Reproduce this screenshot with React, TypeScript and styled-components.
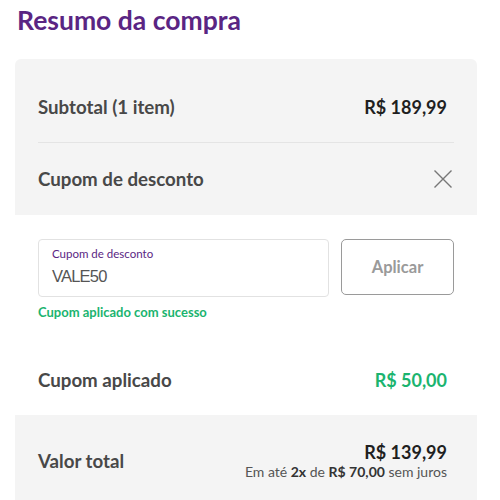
import React from "react";
import styled, { createGlobalStyle } from "styled-components";

const Global = createGlobalStyle`
  html, body { margin: 0; padding: 0; background: #ffffff; }
  body { font-family: Lato, "Open Sans", sans-serif; }
  * { box-sizing: border-box; }
`;

const Page = styled.div`
  width: 500px;
  padding: 5px 23px 0 15px;
`;

const Title = styled.h1`
  margin: 0 0 0 2px;
  font-family: Lato, sans-serif;
  font-size: 26.5px;
  line-height: 30px;
  font-weight: 700;
  color: #5a2583;
`;

const Card = styled.section`
  margin-top: 24px;
  background: #f4f4f4;
  border-radius: 6px 6px 0 0;
  padding-bottom: 40px;
`;

const GrayBlock = styled.div`
  padding: 0 23px;
`;

const Row = styled.div<{ $height: number; $top?: number; $divider?: boolean }>`
  display: flex;
  align-items: center;
  justify-content: space-between;
  height: ${(p) => p.$height}px;
  padding-top: ${(p) => p.$top ?? 0}px;
  border-bottom: ${(p) => (p.$divider ? "1px solid #e4e4e4" : "none")};
`;

const Label = styled.span`
  font-size: 18.7px;
  font-weight: 700;
  color: #484848;
  font-family: Lato, sans-serif;
`;

const Amount = styled.span<{ $green?: boolean }>`
  font-size: 18px;
  font-weight: 700;
  padding-right: 7px;
  color: ${(p) => (p.$green ? "#1bb46f" : "#1f1f1f")};
`;

const CloseButton = styled.button`
  border: none;
  background: none;
  padding: 0;
  width: 22px;
  height: 22px;
  display: flex;
  align-items: center;
  justify-content: center;
  cursor: pointer;
`;

const WhiteBlock = styled.div`
  background: #ffffff;
  padding: 24px 23px 0;
`;

const CouponForm = styled.div`
  display: flex;
  gap: 12px;
  align-items: flex-start;
`;

const Field = styled.label`
  flex: 1;
  height: 58px;
  border: 1px solid #e2e2e2;
  border-radius: 4px;
  padding: 7px 13px 0;
  display: flex;
  flex-direction: column;
`;

const FieldLabel = styled.span`
  font-size: 11.5px;
  line-height: 14px;
  color: #5a2583;
`;

const FieldValue = styled.span`
  margin-top: 4px;
  font-family: "Liberation Sans", Arial, sans-serif;
  font-size: 16.5px;
  line-height: 22px;
  color: #555555;
  letter-spacing: -0.8px;
`;

const ApplyButton = styled.button`
  width: 113px;
  height: 56px;
  border: 1px solid #9a9a9a;
  border-radius: 5px;
  background: #ffffff;
  color: #9a9a9a;
  font-family: Lato, sans-serif;
  font-size: 16.5px;
  font-weight: 700;
`;

const Success = styled.div`
  margin-top: 7px;
  font-size: 13px;
  line-height: 16px;
  color: #1bb46f;
  font-weight: 700;
`;

const AppliedRow = styled(Row)`
  margin-top: 25px;
`;

const TotalRow = styled.div`
  display: flex;
  align-items: center;
  justify-content: space-between;
  padding: 26px 23px 0;
`;

const TotalRight = styled.div`
  display: flex;
  flex-direction: column;
  align-items: flex-end;
  padding-right: 7px;
`;

const TotalAmount = styled.span`
  font-size: 18px;
  line-height: 22px;
  font-weight: 700;
  color: #1f1f1f;
`;

const Installments = styled.span`
  font-size: 14px;
  line-height: 18px;
  color: #555555;
  b { color: #333333; }
`;

export default function App() {
  return (
    <>
      <Global />
      <Page>
        <Title>Resumo da compra</Title>
        <Card>
          <GrayBlock>
            <Row $height={84} $top={12} $divider>
              <Label>Subtotal (1 item)</Label>
              <Amount>R$ 189,99</Amount>
            </Row>
            <Row $height={72}>
              <Label>Cupom de desconto</Label>
              <CloseButton aria-label="Fechar">
                <svg width="20" height="20" viewBox="0 0 20 20">
                  <path d="M1.5 1.5 L18.5 18.5 M18.5 1.5 L1.5 18.5" stroke="#777" strokeWidth="1.4" />
                </svg>
              </CloseButton>
            </Row>
          </GrayBlock>
          <WhiteBlock>
            <CouponForm>
              <Field>
                <FieldLabel>Cupom de desconto</FieldLabel>
                <FieldValue>VALE50</FieldValue>
              </Field>
              <ApplyButton>Aplicar</ApplyButton>
            </CouponForm>
            <Success>Cupom aplicado com sucesso</Success>
            <AppliedRow $height={70}>
              <Label>Cupom aplicado</Label>
              <Amount $green>R$ 50,00</Amount>
            </AppliedRow>
          </WhiteBlock>
          <TotalRow>
            <Label>Valor total</Label>
            <TotalRight>
              <TotalAmount>R$ 139,99</TotalAmount>
              <Installments>
                Em até <b>2x</b> de <b>R$ 70,00</b> sem juros
              </Installments>
            </TotalRight>
          </TotalRow>
        </Card>
      </Page>
    </>
  );
}
